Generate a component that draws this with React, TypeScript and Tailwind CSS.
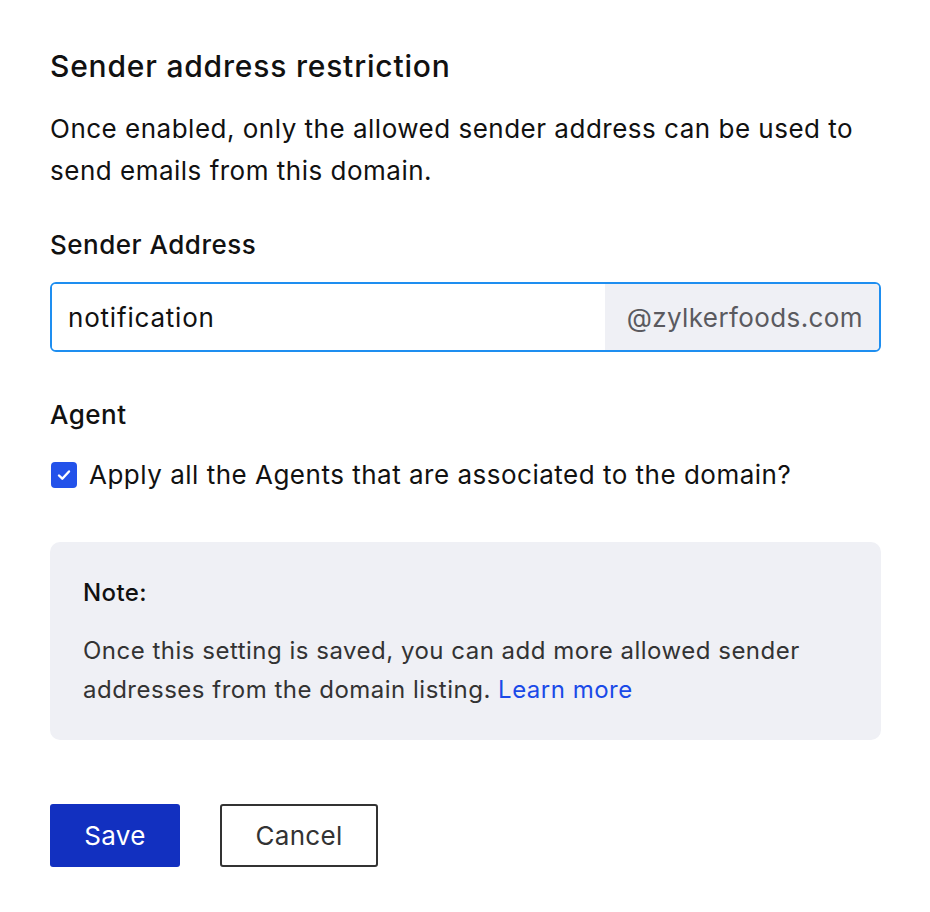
import React, { useState } from 'react';

export default function App() {
    const [address, setAddress] = useState('notification');
    const [applyAll, setApplyAll] = useState(true);

    return (
        <div className="min-h-screen w-full bg-white font-['Inter','Lato',sans-serif] text-[#111]">
            <div className="w-[831px] ml-[50px] pt-[46px] flex flex-col">
                <h2 className="text-[30px] font-medium leading-[40px] tracking-[0.8px]">Sender address restriction</h2>
                <p className="mt-[22px] max-w-[815px] text-[26px] leading-[42px] tracking-[0.5px] text-[#111]">
                    Once enabled, only the allowed sender address can be used to send emails from this domain.
                </p>

                <label className="mt-[35px] text-[26px] font-medium leading-[36px] tracking-[0.5px]">Sender Address</label>
                <div className="mt-[19px] h-[70px] flex rounded-[6px] border-2 border-[#1e8ef0] overflow-hidden">
                    <input
                        value={address}
                        onChange={(e) => setAddress(e.target.value)}
                        className="flex-1 min-w-0 px-[16px] text-[26px] tracking-[0.8px] text-[#111] outline-none bg-white"
                    />
                    <span className="w-[274px] bg-[#eff0f5] flex items-center justify-end pr-[16px] text-[26px] tracking-[0.4px] text-[#5a5a5f]">
                        @zylkerfoods.com
                    </span>
                </div>

                <label className="mt-[45px] text-[26px] font-medium leading-[36px] tracking-[0.5px]">Agent</label>
                <label className="mt-[24px] flex items-center gap-[12px] cursor-pointer">
                    <input
                        type="checkbox"
                        checked={applyAll}
                        onChange={(e) => setApplyAll(e.target.checked)}
                        className="sr-only"
                    />
                    <span className={`ml-[1px] w-[26px] h-[26px] rounded-[4px] flex items-center justify-center ${applyAll ? 'bg-[#2352ea]' : 'border-2 border-[#888] bg-white'}`}>
                        {applyAll && (
                            <svg width="18" height="18" viewBox="0 0 18 18" fill="none">
                                <path d="M4 9.5l3.3 3.2L14 5.5" stroke="white" strokeWidth="2.4" strokeLinecap="round" strokeLinejoin="round" />
                            </svg>
                        )}
                    </span>
                    <span className="text-[26px] leading-[36px] tracking-[0.5px] text-[#111]">Apply all the Agents that are associated to the domain?</span>
                </label>

                <div className="mt-[49px] h-[198px] rounded-[10px] bg-[#eff0f5] px-[33px] pt-[34px] flex flex-col">
                    <div className="text-[24px] font-medium leading-[34px] tracking-[0.4px] text-[#111]">Note:</div>
                    <p className="mt-[21px] text-[24px] leading-[39px] tracking-[0.5px] text-[#333]">
                        Once this setting is saved, you can add more allowed sender addresses from the domain listing.{' '}
                        <a href="#" className="text-[#1a4ae8]">Learn more</a>
                    </p>
                </div>

                <div className="mt-[64px] flex gap-[40px]">
                    <button className="w-[130px] h-[63px] rounded-[3px] bg-[#1230c0] text-white text-[26px] tracking-[0.3px]">Save</button>
                    <button className="w-[158px] h-[63px] rounded-[3px] border-2 border-[#333] bg-white text-[#333] text-[26px] tracking-[0.3px]">Cancel</button>
                </div>
            </div>
        </div>
    );
}
